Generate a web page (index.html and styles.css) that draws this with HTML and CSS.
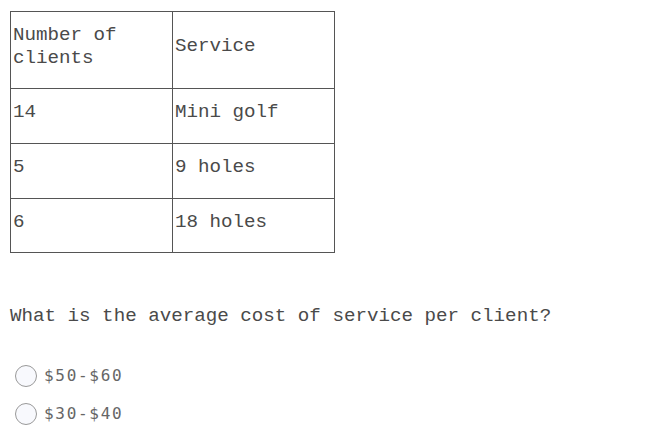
FILE: index.html
```html
<!DOCTYPE html>
<html>
<head>
<meta charset="utf-8">
<link rel="stylesheet" href="styles.css">
</head>
<body>
<div class="page">
  <table class="data">
    <tr class="r-head"><td>Number of clients</td><td>Service</td></tr>
    <tr class="r-body"><td>14</td><td>Mini golf</td></tr>
    <tr class="r-body"><td>5</td><td>9 holes</td></tr>
    <tr class="r-last"><td>6</td><td>18 holes</td></tr>
  </table>
  <p class="question">What is the average cost of service per client?</p>
  <div class="options">
    <label class="opt"><span class="radio"></span><span class="opt-text">$50-$60</span></label>
    <label class="opt"><span class="radio"></span><span class="opt-text">$30-$40</span></label>
  </div>
</div>
</body>
</html>
```
FILE: styles.css
```css
html, body {
  margin: 0;
  padding: 0;
  background: #fff;
}
.page {
  padding: 11px 10px 0 10px;
  font-family: "Liberation Mono", "Courier New", monospace;
  font-size: 19.2px;
  line-height: 23px;
  color: #4a4a4a;
}
.data {
  border-collapse: collapse;
  width: 325px;
  table-layout: fixed;
}
.data td {
  border: 1px solid #555;
  padding: 0 2px 7px 2px;
  vertical-align: middle;
  width: 50%;
}
.r-head td { height: 69px; }
.r-body td { height: 47px; }
.r-last td { height: 46px; }
.question {
  margin: 52px 0 0 0;
}
.options {
  margin-top: 29px;
  display: flex;
  flex-direction: column;
}
.opt {
  display: flex;
  align-items: center;
  height: 38px;
  padding-left: 5px;
}
.radio {
  width: 20px;
  height: 20px;
  border: 1px solid #999;
  border-radius: 50%;
  background: #f8f9fd;
  flex: none;
}
.opt-text {
  margin-left: 7px;
  margin-top: -2px;
  font-family: "DejaVu Sans Mono", monospace;
  font-size: 16px;
  letter-spacing: 1.7px;
  color: #666;
}
```
